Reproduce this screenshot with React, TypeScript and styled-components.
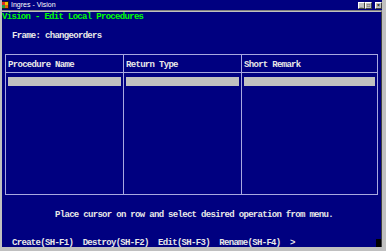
import styled, { createGlobalStyle } from "styled-components";

const Global = createGlobalStyle`
  html, body {
    margin: 0;
    padding: 0;
    background: #c0c0c0;
  }
`;

const Window = styled.div`
  width: 386px;
  height: 251px;
  box-sizing: border-box;
  background: #c0c0c0;
  border-left: 2px solid #c0c0c0;
  border-right: 4px solid #c0c0c0;
  border-bottom: 4px solid #c0c0c0;
  display: flex;
  flex-direction: column;
  overflow: hidden;
`;

const TitleBar = styled.div`
  height: 10px;
  margin-left: -2px;
  margin-right: -4px;
  padding: 0 6px 0 1px;
  background: #000080;
  display: flex;
  align-items: center;
  gap: 2px;
  border-bottom: 1px solid #808080;
`;

const AppIcon = styled.svg`
  width: 8px;
  height: 8px;
  flex: none;
`;

const Caption = styled.span`
  font-family: "Liberation Sans", Arial, sans-serif;
  font-size: 7px;
  color: #ffffff;
  line-height: 10px;
  flex: 1;
`;

const CapButton = styled.div<{ $gap?: boolean }>`
  width: 5px;
  height: 5px;
  margin-right: -2px;
  background: #c0c0c0;
  border: 1px solid;
  border-color: #ffffff #404040 #404040 #ffffff;
  margin-left: ${(p) => (p.$gap ? "3px" : "0")};
  display: flex;
  align-items: center;
  justify-content: center;
  font-family: "Liberation Sans", Arial, sans-serif;
  font-size: 5px;
  font-weight: bold;
  line-height: 5px;
  color: #000;
`;

const Screen = styled.div`
  flex: 1;
  background: #000080;
  border-top: 1px solid #c0c0c0;
  border-right: 1px solid #404040;
  position: relative;
  font-family: "Liberation Mono", "DejaVu Sans Mono", monospace;
  font-size: 9px;
  letter-spacing: -0.69px;
  font-weight: bold;
  line-height: 10px;
  color: #e8e8e8;
  display: flex;
  flex-direction: column;
  white-space: pre;
`;

const Line = styled.div<{ $color?: string; $indent?: number; $top?: number }>`
  height: 10px;
  color: ${(p) => p.$color ?? "#e8e8e8"};
  padding-left: ${(p) => p.$indent ?? 0}px;
  margin-top: ${(p) => p.$top ?? 0}px;
`;

const Table = styled.div`
  margin: 13px 3px 0 3px;
  height: 141px;
  box-sizing: border-box;
  border: 1px solid #a8a8e0;
  display: grid;
  grid-template-columns: 118px 118px 1fr;
  grid-template-rows: 18px 1fr;
`;

const HeadCell = styled.div<{ $last?: boolean }>`
  border-right: ${(p) => (p.$last ? "none" : "1px solid #a8a8e0")};
  border-bottom: 1px solid #a8a8e0;
  padding: 5px 0 0 2px;
  line-height: 10px;
`;

const BodyCell = styled.div<{ $last?: boolean }>`
  border-right: ${(p) => (p.$last ? "none" : "1px solid #a8a8e0")};
  padding: 4px 2px 0 2px;
`;

const Field = styled.div`
  height: 9px;
  background: #c0c0c0;
`;

const Cursor = styled.div`
  position: absolute;
  right: 0;
  bottom: 0;
  width: 5px;
  height: 9px;
  background: #000000;
`;

const columns = ["Procedure Name", "Return Type", "Short Remark"];

export default function App() {
  return (
    <>
      <Global />
      <Window>
        <TitleBar>
          <AppIcon viewBox="0 0 8 8">
            <rect x="0" y="0" width="8" height="8" fill="#202020" />
            <rect x="1" y="1" width="3" height="3" fill="#e03020" />
            <rect x="4" y="1" width="3" height="3" fill="#f0c000" />
            <rect x="1" y="4" width="3" height="3" fill="#20a040" />
            <rect x="4" y="4" width="3" height="3" fill="#e06010" />
          </AppIcon>
          <Caption>Ingres - Vision</Caption>
          <CapButton>_</CapButton>
          <CapButton>□</CapButton>
          <CapButton $gap>×</CapButton>
        </TitleBar>
        <Screen>
          <Line $color="#00ff00" $top={0}>Vision - Edit Local Procedures</Line>
          <Line $indent={10} $top={9}>Frame: changeorders</Line>
          <Table>
            {columns.map((c, i) => (
              <HeadCell key={c} $last={i === columns.length - 1}>
                {c}
              </HeadCell>
            ))}
            {columns.map((c, i) => (
              <BodyCell key={c} $last={i === columns.length - 1}>
                <Field />
              </BodyCell>
            ))}
          </Table>
          <Line $indent={53} $top={15}>
            Place cursor on row and select desired operation from menu.
          </Line>
          <Line $indent={10} $top={18}>
            {"Create(SH-F1)  Destroy(SH-F2)  Edit(SH-F3)  Rename(SH-F4)  >"}
          </Line>
          <Cursor />
        </Screen>
      </Window>
    </>
  );
}
